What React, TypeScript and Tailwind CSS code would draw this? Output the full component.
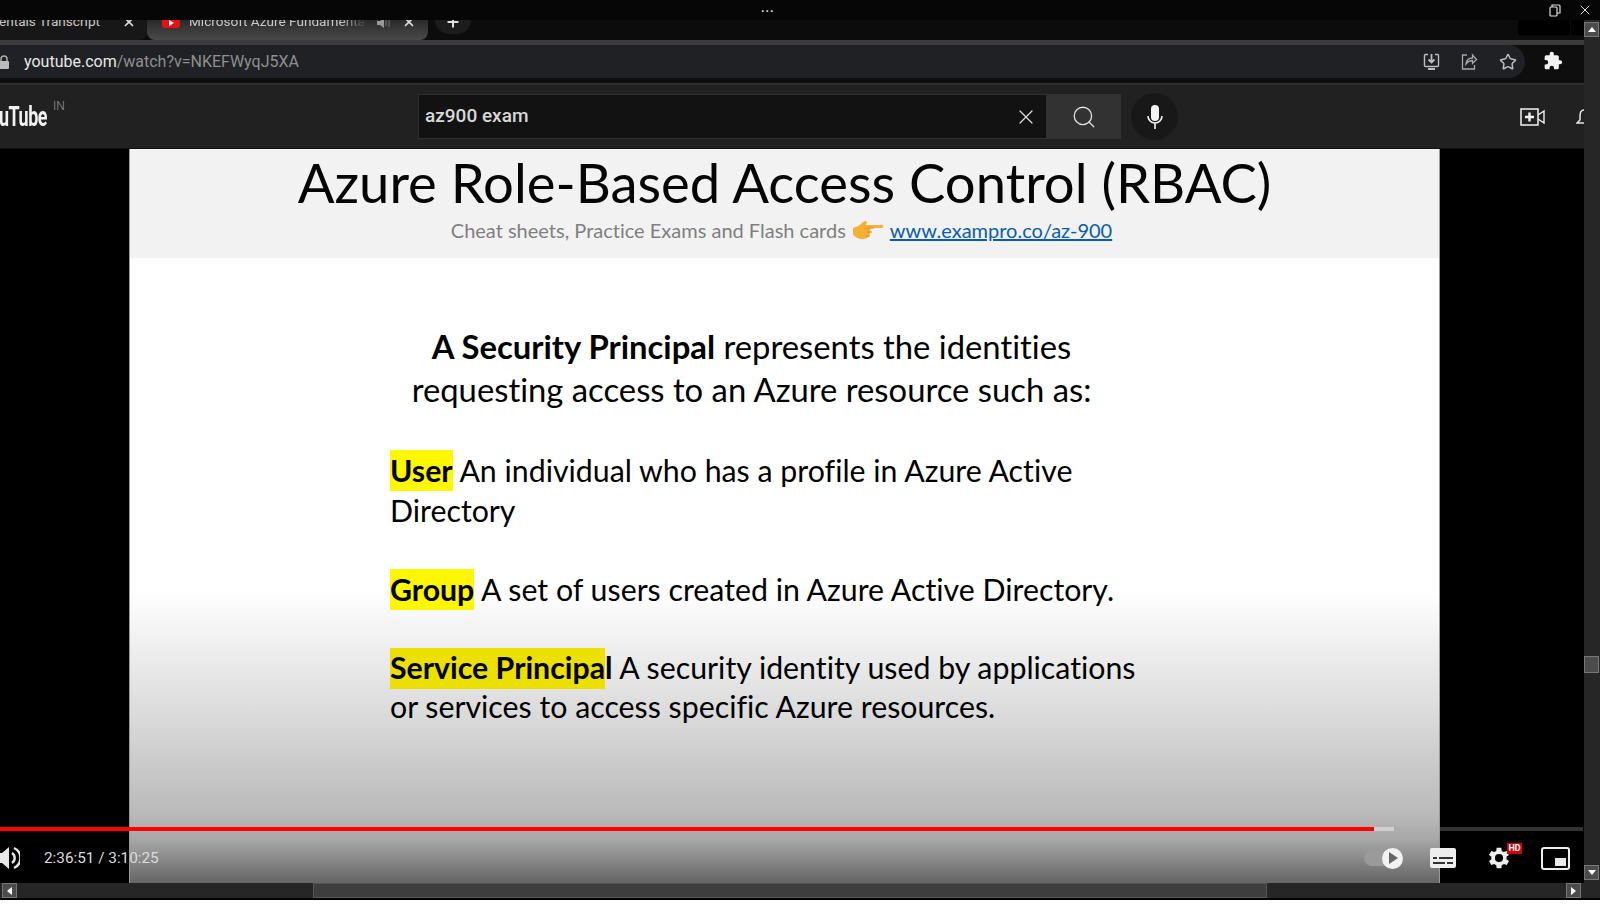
import { Search, Star, X, Plus } from 'lucide-react'

function Mark({ children }: { children: React.ReactNode }) {
  return <span className="inline-block h-[41px] bg-[#fff700] font-bold leading-[41px]">{children}</span>
}

function TabStrip() {
  return (
    <div className="flex h-5 shrink-0 overflow-hidden bg-[#0c0c0c] [font-family:Roboto,sans-serif] text-[13.600px] text-[#c8c8c8]">
      <div className="flex w-[147px] items-start rounded-br-lg bg-[#171717]">
        <span className="-mt-[9px] -ml-[1px] w-[108px] shrink-0 whitespace-nowrap">entals Transcript</span>
        <X size={14} strokeWidth={3} className="ml-[15px] -mt-[5px] shrink-0 text-[#ddd]" />
      </div>
      <div className="flex w-[281px] items-start rounded-b-lg bg-gradient-to-b from-[#2a2a2a] to-[#4a4a4a]">
        <span className="ml-[15px] flex h-[8px] w-[18px] items-start justify-center rounded-b-[3px] bg-[#e81010]">
          <span className="h-0 w-0 border-y-[3px] border-l-[5px] border-y-transparent border-l-white" />
        </span>
        <span className="-mt-[9px] ml-[9px] w-[178px] shrink-0 overflow-hidden whitespace-nowrap [mask-image:linear-gradient(to_right,#000_85%,transparent)]">Microsoft Azure Fundamentals</span>
        <svg width="13" height="12" viewBox="0 0 13 12" fill="#999" className="-mt-[3px] ml-[10px] shrink-0">
          <path d="M0 4h3l4-3v10L3 8H0z" />
          <path d="M9 3v6M12 1v9" stroke="#777" strokeWidth="1" />
        </svg>
        <X size={14} strokeWidth={3} className="ml-[12px] -mt-[5px] shrink-0 text-[#ddd]" />
      </div>
      <div className="ml-[7px] flex h-[14px] w-[36px] shrink-0 items-start justify-center rounded-b-full bg-[#1c1c1c]">
        <Plus size={16} strokeWidth={3} className="-mt-[6px] text-[#ddd]" />
      </div>
      <div className="ml-auto flex h-[15px] gap-px">
        <div className="w-[52px] bg-black" />
        <div className="w-[13px] bg-black" />
      </div>
    </div>
  )
}

function Toolbar() {
  return (
    <div className="flex h-[43px] shrink-0 flex-col border-t-2 border-[#3c3c3c] bg-[#333]">
      <div className="h-[3px] bg-[#3a3a3a]" />
      <div className="flex h-[33px] bg-[#0e0e0e]">
        <div className="flex w-[1525px] items-center rounded-r-full bg-[#202124] [font-family:Roboto,sans-serif] text-[16px]">
          <svg width="10" height="14" viewBox="0 0 10 14" className="-ml-px shrink-0">
            <path d="M2 6V4a3 3 0 0 1 6 0v2" fill="none" stroke="#aaa" strokeWidth="1.5" />
            <rect x="0" y="6" width="10" height="8" rx="1" fill="#bbb" />
          </svg>
          <span className="ml-[15px] text-[#e8e8e8]">youtube.com</span>
          <span className="text-[#8f8f8f]">/watch?v=NKEFWyqJ5XA</span>
          <div className="ml-auto mr-[8px] flex items-center gap-[21px]">
            <svg width="17" height="17" viewBox="0 0 17 17" fill="none" stroke="#bdbdbd" strokeWidth="1.4">
              <path d="M5 1.500H2.500a1 1 0 0 0-1 1v10a1 1 0 0 0 1 1h12a1 1 0 0 0 1-1v-10a1 1 0 0 0-1-1H12" />
              <path d="M8.500 1v8M5.500 6.500l3 3 3-3" strokeWidth="1.8" />
              <path d="M5 16h7" strokeWidth="2" />
            </svg>
            <svg width="17" height="17" viewBox="0 0 17 17" fill="none" stroke="#a8a8a8" strokeWidth="1.3">
              <path d="M6 2H1.500v14h12v-4" />
              <path d="M5 11c.5-4 3-6 6.500-6V2l4 4.500-4 4V7.500C9 7.500 6.500 9 5 11z" />
            </svg>
            <Star size={18} strokeWidth={2} className="text-[#bdbdbd]" />
          </div>
        </div>
        <svg width="20" height="20" viewBox="0 0 24 24" fill="#f2f2f2" className="ml-[18px] mt-[6px] shrink-0">
          <path d="M20.500 11H19V7a2 2 0 0 0-2-2h-4V3.500a2.500 2.500 0 0 0-5 0V5H4a2 2 0 0 0-2 2v3.800h1.500a2.700 2.700 0 0 1 0 5.400H2V20a2 2 0 0 0 2 2h3.800v-1.500a2.700 2.700 0 0 1 5.400 0V22H17a2 2 0 0 0 2-2v-4h1.500a2.500 2.500 0 0 0 0-5z" />
        </svg>
      </div>
      <div className="flex-1 bg-[#0e0e0e]" />
    </div>
  )
}

function YoutubeHeader() {
  return (
    <div className="flex h-[66px] shrink-0 items-center overflow-hidden border-b border-t-2 border-b-[#111] border-t-[#2f2f2f] bg-[#212121] [font-family:Roboto,sans-serif]">
      <div className="flex w-[418px] shrink-0 items-start">
        <span className="-ml-px w-[54px] shrink-0 origin-left scale-x-[0.64] whitespace-nowrap text-[28px] font-bold leading-none tracking-tight text-[#f2f2f2]">uTube</span>
        <span className="-mt-[6px] text-[12px] font-light text-[#999]">IN</span>
      </div>
      <div className="flex h-[45px] w-[629px] items-center justify-between border border-[#303030] bg-[#121212] pl-[6px] pr-[8px] text-[19px] font-medium text-[#d8d8d8]">
        <span>az900 exam</span>
        <X size={24} strokeWidth={1.2} className="text-[#e0e0e0]" />
      </div>
      <div className="flex h-[45px] w-[74px] items-center justify-center bg-[#323232]">
        <Search size={26} strokeWidth={1.2} className="text-[#e0e0e0]" />
      </div>
      <div className="ml-[10px] flex h-[47px] w-[47px] items-center justify-center rounded-full bg-[#181818]">
        <svg width="18" height="26" viewBox="0 0 18 26" fill="none">
          <rect x="5" y="1" width="8" height="16" rx="4" fill="#f4f4f4" />
          <path d="M2 12a7 7 0 0 0 14 0M9 19v6" stroke="#f4f4f4" strokeWidth="1.600" />
        </svg>
      </div>
      <svg width="25" height="18" viewBox="0 0 25 18" fill="none" className="ml-[342px] shrink-0">
        <rect x="1" y="1" width="17" height="16" stroke="#f2f2f2" strokeWidth="1.500" />
        <path d="M9.500 4.500v9M5 9h9" stroke="#f2f2f2" strokeWidth="2.400" />
        <path d="M18 7l6-4v12l-6-4" stroke="#f2f2f2" strokeWidth="1.400" />
      </svg>
      <svg width="8" height="20" viewBox="0 0 8 20" fill="none" stroke="#e8e8e8" strokeWidth="1.500" className="ml-[31px] shrink-0">
        <path d="M8 3C5 3 4 6 4 9v4l-3 3h7" />
      </svg>
    </div>
  )
}

function Slide() {
  return (
    <div className="ml-[129px] flex h-full w-[1311px] flex-col border-x border-x-[#999] [background:linear-gradient(to_bottom,#fff_441px,#d9d9d9_571px,#b9b9b9_666px,#a8a8a8_690px,#666_733px)] [font-family:Lato,sans-serif] [font-variant-ligatures:none] text-black">
      <div className="h-[109px] shrink-0 bg-[#f2f2f2] text-center">
        <div className="mt-[-1px] whitespace-nowrap text-[54.400px] leading-[68px] text-[#050505]">Azure Role-Based Access Control (RBAC)</div>
        <div className="mt-[1px] flex items-center justify-center whitespace-nowrap pr-[6px] text-[20px] leading-[26px] text-[#7f7f7f]">
          <span>Cheat sheets, Practice Exams and Flash cards</span>
          <svg width="32" height="20" viewBox="0 0 32 20" className="mx-[6px] shrink-0">
            <path d="M1 8c3-1 6-2 9-5 2-2 4-3 5-1l-1 3h16c2 0 2 3 0 3H18c1 3 0 8-3 10-4 2-9 1-11-1-2-1-3-2-3-3z" fill="#f5b034" />
            <path d="M14 8h8M15 12h5M14 16h4" stroke="#d98a1c" strokeWidth="1" />
          </svg>
          <a className="text-[#0b5cad] underline">www.exampro.co/az-900</a>
        </div>
      </div>
      <div className="mt-[67px] pr-[66px] text-center text-[32.800px] leading-[43px]">
        <p><b className="font-bold">A Security Principal</b> represents the identities</p>
        <p>requesting access to an Azure resource such as:</p>
      </div>
      <div className="ml-[260px] mt-[39px] w-[800px] text-[30.300px] leading-[39.200px]">
        <p><Mark>User</Mark> An individual who has a profile in Azure Active</p>
        <p>Directory</p>
        <p className="mt-[39.200px]"><Mark>Group</Mark> A set of users created in Azure Active Directory.</p>
        <p className="mt-[37.500px]"><b className="relative font-bold"><span className="absolute left-0 top-[-1px] h-[41px] w-[215px] bg-[#ebe000]" /><span className="relative">Service Principal</span></b> A security identity used by applications</p>
        <p>or services to access specific Azure resources.</p>
      </div>
    </div>
  )
}

function PlayerControls() {
  return (
    <>
      <div className="absolute left-0 right-[1px] top-[678px] flex h-[4px]">
        <div className="w-[1374px] bg-[#f00]" />
        <div className="w-[20px] bg-[#d0d0d0]" />
        <div className="flex-1 [background:rgba(170,170,170,0.3)]" />
      </div>
      <div className="absolute bottom-[2px] left-0 right-0 flex h-[46px] items-center [font-family:Roboto,sans-serif]">
        <svg width="20" height="24" viewBox="0 0 20 24" fill="#e8e8e8" className="shrink-0">
          <path d="M0 7h2l7-6v22l-7-6H0z" />
          <path d="M12 7a6 6 0 0 1 0 10M14 2a11 11 0 0 1 0 20" fill="none" stroke="#e8e8e8" strokeWidth="2.400" />
        </svg>
        <span className="ml-[24px] whitespace-nowrap text-[15.300px] text-[#dcdcdc]">2:36:51 / 3:10:25</span>
        <div className="relative ml-auto mr-[27px] flex items-center">
          <div className="h-[16px] w-[29px] rounded-full bg-[#9a9a9a]" />
          <div className="-ml-[11px] flex h-[21px] w-[21px] items-center justify-center rounded-full bg-[#f2f2f2]">
            <div className="ml-[2px] h-0 w-0 border-y-[6px] border-l-[9px] border-y-transparent border-l-[#666]" />
          </div>
        </div>
        <svg width="26" height="20" viewBox="0 0 26 20" className="shrink-0">
          <rect width="26" height="20" rx="2" fill="#eee" />
          <path d="M3 10h4M9 10h14M3 15h12M17 15h6" stroke="#333" strokeWidth="2" />
        </svg>
        <div className="relative ml-[29px] shrink-0">
          <svg width="28" height="28" viewBox="0 0 24 24" className="block">
            <path d="M19.400 13a7.500 7.500 0 0 0 0-2l2.100-1.600-2-3.500-2.500 1a7.500 7.500 0 0 0-1.700-1L15 3.200h-4l-.4 2.700a7.500 7.500 0 0 0-1.700 1l-2.500-1-2 3.500L6.500 11a7.500 7.500 0 0 0 0 2l-2.100 1.600 2 3.500 2.500-1a7.500 7.500 0 0 0 1.700 1l.4 2.700h4l.4-2.700a7.500 7.500 0 0 0 1.700-1l2.500 1 2-3.500zM13 15.500a3.500 3.500 0 1 1 0-7 3.500 3.500 0 0 1 0 7z" fill="#eee" transform="translate(-1 0)" />
          </svg>
          <span className="absolute -right-[9px] -top-[1px] flex h-[11px] w-[15px] items-center justify-center bg-[#d40000] text-[9px] font-bold leading-none text-white">HD</span>
        </div>
        <div className="ml-[28px] mr-[14px] flex h-[23px] w-[29px] shrink-0 items-end justify-end rounded-[3px] border-2 border-[#eee] p-[2px]">
          <div className="h-[8px] w-[11px] bg-[#e8e8e8]" />
        </div>
      </div>
    </>
  )
}

function ScrollButton({ dir }: { dir: 'up' | 'down' | 'left' | 'right' }) {
  const shape = {
    up: 'border-x-[4px] border-b-[5px] border-x-transparent border-b-white',
    down: 'border-x-[4px] border-t-[5px] border-x-transparent border-t-white',
    left: 'border-y-[4px] border-r-[5px] border-y-transparent border-r-white',
    right: 'border-y-[4px] border-l-[5px] border-y-transparent border-l-white',
  }[dir]
  return (
    <div className="flex h-[15px] w-[15px] shrink-0 items-center justify-center border border-[#777] bg-[#4c4c4c]">
      <div className={`h-0 w-0 ${shape}`} />
    </div>
  )
}

export default function App() {
  return (
    <div className="flex h-[914px] w-[1600px] flex-col overflow-hidden bg-white">
      <div className="relative h-5 shrink-0 bg-[#060606]">
        <span className="absolute left-[761px] top-[-1px] text-[12px] font-bold tracking-[1px] text-[#ddd] [font-family:Roboto,sans-serif]">...</span>
        <svg width="12" height="13" viewBox="0 0 12 13" fill="none" stroke="#ddd" strokeWidth="1.200" className="absolute left-[1549px] top-[4px]">
          <rect x="1" y="3" width="7" height="9" rx="1" />
          <path d="M3 3V1h7a1 1 0 0 1 1 1v7H8" />
        </svg>
        <X size={16} strokeWidth={1.500} className="absolute left-[1577px] top-[2px] text-[#e8e8e8]" />
      </div>

      <div className="flex h-[863px] shrink-0">
        <div className="flex min-w-0 flex-1 flex-col">
          <TabStrip />
          <Toolbar />
          <YoutubeHeader />
          <div className="relative min-h-0 flex-1 bg-black">
            <Slide />
            <PlayerControls />
          </div>
        </div>
        <div className="flex w-4 shrink-0 flex-col bg-[#262626] pb-[3px] pt-[2px]">
          <ScrollButton dir="up" />
          <div className="mt-[619px] h-[17px] w-[15px] border border-[#777] bg-[#4c4c4c]" />
          <div className="flex-1" />
          <ScrollButton dir="down" />
        </div>
      </div>

      <div className="flex h-[17px] shrink-0 items-center border-b-2 border-black bg-[#262626] pl-[2px] pr-[19px]">
        <ScrollButton dir="left" />
        <div className="ml-[296px] h-[15px] w-[954px] border border-[#555] bg-[#3e3e3e]" />
        <div className="flex-1" />
        <ScrollButton dir="right" />
      </div>
    </div>
  )
}
